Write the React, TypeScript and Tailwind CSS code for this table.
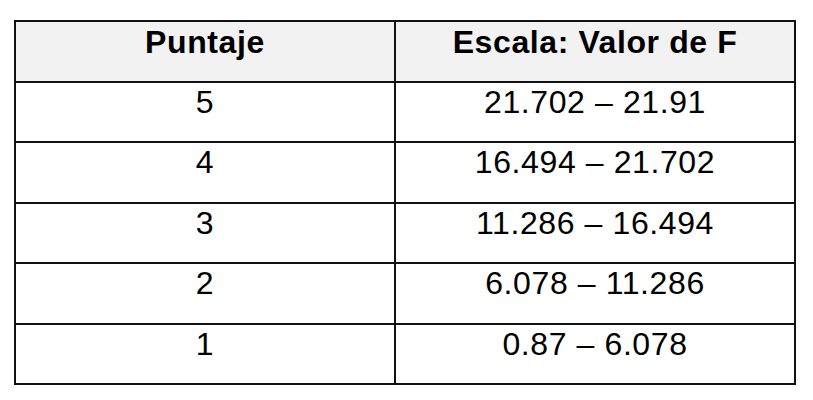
import React from "react";

const rows: [string, string][] = [
  ["5", "21.702 – 21.91"],
  ["4", "16.494 – 21.702"],
  ["3", "11.286 – 16.494"],
  ["2", "6.078 – 11.286"],
  ["1", "0.87 – 6.078"],
];

export default function App() {
  return (
    <div
      className="w-[813px] h-[400px] bg-white pt-[20px] pl-[14px]"
      style={{ fontFamily: '"Liberation Sans", Arial, sans-serif' }}
    >
      <div className="w-[782px] border-2 border-[#111] flex flex-col text-black text-[32px] tracking-[0.6px] leading-[36px]">
        <div className="flex h-[59px] bg-[#f2f2f2] font-bold">
          <div className="w-[380px] border-r-2 border-[#111] text-center pt-[2px]">Puntaje</div>
          <div className="flex-1 text-center pt-[2px]">Escala: Valor de F</div>
        </div>
        {rows.map(([a, b]) => (
          <div key={a} className="flex h-[60.4px] border-t-2 border-[#111]">
            <div className="w-[380px] border-r-2 border-[#111] text-center pt-[1px]">{a}</div>
            <div className="flex-1 text-center pt-[1px]">{b}</div>
          </div>
        ))}
      </div>
    </div>
  );
}
